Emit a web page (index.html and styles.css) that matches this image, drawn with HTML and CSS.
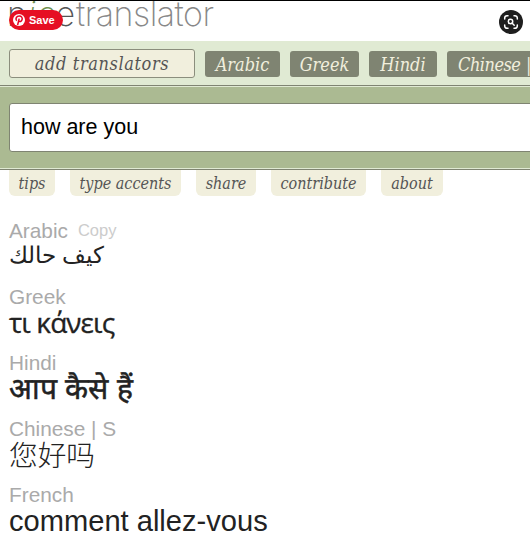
FILE: index.html
```
<!DOCTYPE html>
<html lang="en">
<head>
    <meta charset="UTF-8">
    <meta name="viewport" content="width=device-width, initial-scale=1.0">
    <title>nicetranslator</title>
    <link rel="stylesheet" href="styles.css">
</head>
<body>
    <div class="page">
        <div class="header">
            <div class="logo"><span class="dark">n</span><span class="leaf">ic</span><span class="dark">e</span><span class="word">translator</span></div>
            <button class="save">
                <svg width="14" height="14" viewBox="0 0 14 14">
                    <circle cx="7" cy="7" r="6" fill="#fff"/>
                    <path d="M5.6 12 7.2 5.6M4.7 7.8C2.9 5.3 4.7 3.1 7.2 3.1c2.4 0 3.4 1.6 2.9 3.4-.5 2-2.4 2.7-3.4 1.4" fill="none" stroke="#e60023" stroke-width="1.5"/>
                </svg>
                <span>Save</span>
            </button>
            <button class="lens">
                <svg width="24" height="24" viewBox="0 0 24 24" fill="none" stroke="#fff" stroke-width="1.5" stroke-linecap="round">
                    <circle cx="12" cy="12" r="12" fill="#1e1e1e" stroke="none"/>
                    <path d="M5.7 9V8a2.3 2.3 0 0 1 2.3-2.3h1M15 5.7h1A2.3 2.3 0 0 1 18.3 8v1M5.7 15v1A2.3 2.3 0 0 0 8 18.3h1M15 18.3h1a2.3 2.3 0 0 0 2.3-2.3v-1"/>
                    <circle cx="11.5" cy="11.5" r="2.2"/>
                    <path d="m13.2 13.2 2 2"/>
                </svg>
            </button>
        </div>
        <div class="translators">
            <a class="add"><span>add translators</span></a>
            <a class="lang arabic"><span>Arabic</span></a>
            <a class="lang greek"><span>Greek</span></a>
            <a class="lang hindi"><span>Hindi</span></a>
            <a class="lang chinese"><span>Chinese | S</span></a>
        </div>
        <div class="search">
            <div class="field">how are you</div>
        </div>
        <div class="tabs">
            <a class="tips">tips</a>
            <a class="accents">type accents</a>
            <a class="share">share</a>
            <a class="contribute">contribute</a>
            <a class="about">about</a>
        </div>
        <div class="results">
            <div class="result">
                <div class="label">Arabic<span class="copy">Copy</span></div>
                <div class="text ar" lang="ar"><bdi>كيف حالك</bdi></div>
            </div>
            <div class="result">
                <div class="label">Greek</div>
                <div class="text el" lang="el">τι κάνεις</div>
            </div>
            <div class="result">
                <div class="label">Hindi</div>
                <div class="text hi" lang="hi">आप कैसे हैं</div>
            </div>
            <div class="result">
                <div class="label">Chinese | S</div>
                <div class="text zh" lang="zh">您好吗</div>
            </div>
            <div class="result">
                <div class="label">French</div>
                <div class="text" lang="fr">comment allez-vous</div>
            </div>
        </div>
    </div>
</body>
</html>
```
FILE: styles.css
```
* {
    box-sizing: border-box;
}
body {
    margin: 0;
    background: #fff;
    font-family: "Liberation Sans", Arial, sans-serif;
    color: #222;
}
.page {
    height: 542px;
    overflow: hidden;
    border-top: 1px solid #000;
}
.header {
    position: relative;
    height: 40px;
    padding-left: 7px;
    overflow: hidden;
}
.logo {
    font-family: Inter, "Liberation Sans", sans-serif;
    font-size: 34px;
    font-weight: 200;
    line-height: 40px;
    margin-top: -7px;
    letter-spacing: .8px;
    white-space: nowrap;
    color: #888;
}
.logo .dark {
    color: #555;
}
.logo .leaf {
    color: #6f9150;
    font-style: italic;
}
.logo .word {
    letter-spacing: -.5px;
}
.save {
    position: absolute;
    left: 9px;
    top: 9px;
    width: 54px;
    height: 20px;
    padding: 0 0 0 3px;
    border: 0;
    border-radius: 10px;
    background: #e60f23;
    color: #fff;
    display: flex;
    align-items: center;
    gap: 3px;
    font: bold 11px/20px "Liberation Sans", Arial, sans-serif;
}
.lens {
    position: absolute;
    left: 499px;
    top: 9px;
    padding: 0;
    border: 0;
    background: none;
    display: flex;
}
.translators {
    height: 45px;
    padding: 8px 0 0 9px;
    display: flex;
    align-items: flex-start;
    background: #e0ead3;
    border-bottom: 1px solid #7f8472;
    font-family: "DejaVu Serif Condensed", "DejaVu Serif", serif;
    font-style: italic;
    white-space: nowrap;
}
.add {
    width: 186px;
    height: 29px;
    flex: none;
    border: 1px solid #8b8e7d;
    border-radius: 3px;
    background: #f1efdd;
    color: #555;
    font-size: 18px;
    letter-spacing: .6px;
    line-height: 27px;
    text-align: center;
}
.lang {
    height: 26px;
    margin: 2px 0 0 10px;
    border-radius: 3px;
    background: #7f8472;
    color: #f1efdd;
    font-size: 18px;
    line-height: 27px;
    text-align: center;
    flex: none;
}
.arabic {
    width: 75px;
}
.greek {
    width: 69px;
}
.hindi {
    width: 68px;
}
.chinese {
    width: 120px;
    padding-left: 11px;
    text-align: left;
    letter-spacing: -.5px;
    word-spacing: 1px;
}
.search {
    height: 84px;
    padding: 16px 0 0 9px;
    background: #abba92;
    border-top: 1px solid #e0ead3;
    border-bottom: 1px solid #7f8472;
    box-shadow: inset 0 -1px #e0ead3;
}
.field {
    width: 540px;
    height: 49px;
    padding-left: 11px;
    border: 1px solid #7f8472;
    border-radius: 3px;
    background: #fff;
    color: #000;
    font-size: 21.5px;
    line-height: 47px;
}
.tabs {
    height: 47px;
    padding-left: 9px;
    display: flex;
    align-items: flex-start;
    gap: 15px;
    font: italic 16px/27px "DejaVu Serif Condensed", "DejaVu Serif", serif;
    color: #555;
    text-align: center;
    white-space: nowrap;
}
.tabs a {
    height: 26px;
    border-radius: 0 0 6px 6px;
    background: #f1efdd;
}
.tabs .tips {
    width: 46px;
}
.tabs .accents {
    width: 111px;
}
.tabs .share {
    width: 60px;
}
.tabs .contribute {
    width: 95px;
}
.tabs .about {
    width: 62px;
}
.results {
    padding: 2px 0 0 9px;
}
.result {
    height: 66px;
    white-space: nowrap;
}
.label {
    height: 24px;
    color: #aaa;
    font-size: 20.8px;
    line-height: 24px;
}
.copy {
    margin-left: 10px;
    color: #ccc;
    font-size: 16.5px;
    vertical-align: 2px;
    line-height: 1;
}
.text {
    height: 34px;
    font-size: 29.1px;
    line-height: 29px;
}
.ar {
    font-size: 22.7px;
    line-height: 25px;
}
.el {
    font-family: "Open Sans", "Noto Sans", sans-serif;
    font-size: 28px;
    line-height: 27px;
    letter-spacing: -.9px;
    -webkit-text-stroke: .3px #222;
}
.hi {
    font-size: 30px;
    line-height: 28px;
    -webkit-text-stroke: .5px #222;
}
.zh {
    font-family: "Liberation Sans", "Noto Sans CJK SC", sans-serif;
    font-size: 28.7px;
    font-weight: 300;
    line-height: 31px;
}
```
